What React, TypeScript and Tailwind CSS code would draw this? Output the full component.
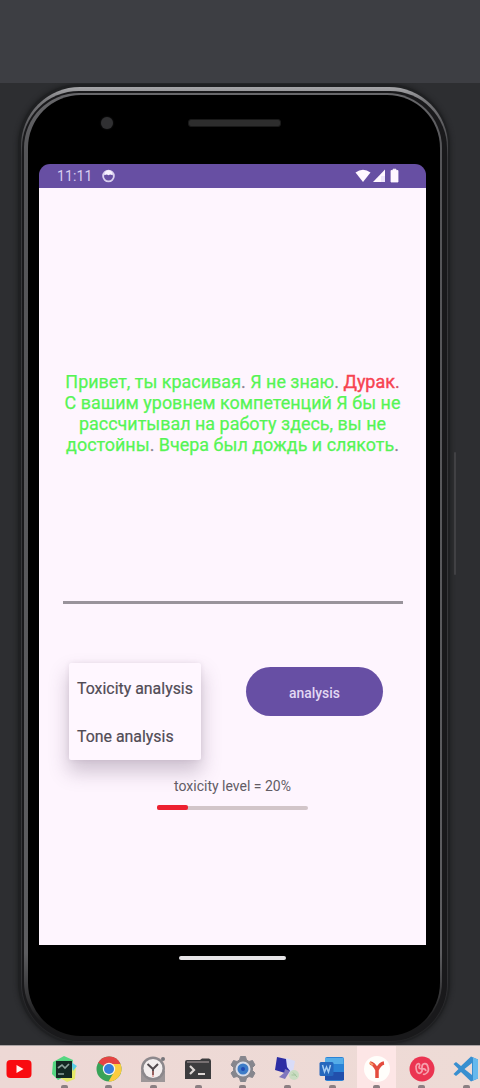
import React from "react";

const Dot = () => <span className="block h-[3px] w-[7px] shrink-0 rounded-t-[2px] bg-[#8b7f82]" />;

function StatusBar() {
  return (
    <div className="flex h-[24px] shrink-0 items-center rounded-t-[11px] bg-[#674fa3] pl-[18px] pr-[25px]">
      <span className="text-[14px] leading-[24px] tracking-[0.1px] text-[#d8cdf0]">11:11</span>
      <svg className="ml-[9px]" width="15" height="14" viewBox="0 0 14 14">
        <circle cx="7" cy="7" r="5.4" fill="none" stroke="#d9cfee" strokeWidth="1.8" />
        <path d="M2.6 6.2Q3.2 1.2 7 1.2Q10.8 1.2 11.4 6.2L8.6 5.5L7 6.2L5.3 5.5Z" fill="#f7f1ff" />
      </svg>
      <svg className="ml-auto" width="46" height="16" viewBox="0 0 46 16" fill="#fff7ff">
        <path d="M0.5 4.5Q8 -1.2 15.5 4.5L8 14Z" />
        <path d="M18 14L30 1.5V14Z" />
        <path d="M26 8H30V14H26Z" fill="#eee4fb" />
        <path d="M36 2.5H38V1.2H41V2.5H43V14H36Z" stroke="#fff7ff" strokeWidth=".8" strokeLinejoin="round" />
      </svg>
    </div>
  );
}

function Screen() {
  return (
    <div className="flex h-[781px] w-[387px] flex-col">
      <StatusBar />
      <div className="flex grow flex-col bg-[#fef5fe]">
        <div className="mt-[183px] flex h-[85px] shrink-0 flex-col items-center text-[17.95px] leading-[21px] whitespace-nowrap text-[#56f455] [-webkit-text-stroke:0.25px]">
          <p>
            Привет, ты красивая<span className="text-[#8b8490]">.</span> Я не знаю<span className="text-[#8b8490]">.</span>{" "}
            <span className="text-[#f74351] [-webkit-text-stroke:0.4px]">Дурак</span><span className="text-[#d0525f]">.</span>
          </p>
          <p>С вашим уровнем компетенций Я бы не</p>
          <p>рассчитывал на работу здесь, вы не</p>
          <p>достойны<span className="text-[#8b8490]">.</span> Вчера был дождь и слякоть<span className="text-[#8b8490]">.</span></p>
        </div>
        <div className="mr-[23px] ml-[24px] mt-[145px] h-[3px] shrink-0 bg-[#99939b]" />
        <div className="mt-[59px] flex">
          <div className="ml-[30px] flex h-[97px] w-[132px] flex-col rounded-[2px] bg-[#fff7ff] pl-[8px] text-[15.9px] whitespace-nowrap text-[#514b55] shadow-[0_11px_19px_1px_rgba(80,60,90,0.27),0_0_5px_rgba(80,60,90,0.1)] [-webkit-text-stroke:0.2px]">
            <button className="h-[49px] pt-[3px] text-left">Toxicity analysis</button>
            <button className="h-[48px] pt-[2px] text-left">Tone analysis</button>
          </div>
          <button className="ml-[45px] mt-[4px] h-[49px] w-[137px] rounded-full bg-[#674fa4] pt-[3px] text-[13.9px] font-medium text-[#e2d8f3]">analysis</button>
        </div>
        <div className="mt-[16px] flex flex-col items-center">
          <p className="text-[14px] leading-[20px] text-[#625c65]">toxicity level = 20%</p>
          <div className="mt-[10px] flex h-[4px] w-[151px] rounded-full bg-[#d2c5c9]">
            <div className="-my-px h-[5px] w-[31px] rounded-[2px] bg-[#ed2030]" />
          </div>
        </div>
      </div>
    </div>
  );
}

function Phone() {
  return (
    <div className="ml-[18px] h-[960px] w-[432px] rounded-[62px] bg-[#1f2022] pt-[3px] pr-[2px] pb-[2px] pl-[3px] shadow-[0_0_4px_1px_#202123]">
      <div className="h-full rounded-[59px] bg-[linear-gradient(180deg,#a5a5a8_0px,#77777a_14px,#39393c_70px,#37373a_860px,#242426_100%)] pt-[4px] pr-[1px] pb-[1px] pl-[1px]">
        <div className="h-full rounded-[57px] bg-[#19191b] pt-[2px] pr-[5px] pb-[4px] pl-[2px]">
          <div className="h-full rounded-[55px] bg-[linear-gradient(180deg,#68686b_0px,#545457_60px,#5d5d60_860px,#1a1a1b_930px,#19191a_100%)] pt-[2px] pr-[2px] pb-[1px] pl-[4px]">
            <div className="flex h-full flex-col rounded-[53px] bg-black pt-[2px] pl-[11px]">
              <div className="flex h-[67px] shrink-0 pt-[20px]">
                <span className="ml-[62px] h-[12px] w-[12px] rounded-full bg-[#303032] shadow-[0_0_2px_#252526]" />
                <span className="mt-[2px] ml-[75px] h-[8px] w-[93px] rounded-[3px] border border-[#191919] bg-[#2d2d2d]" />
              </div>
              <Screen />
              <div className="ml-[140px] mt-[11px] h-[4px] w-[107px] rounded-full bg-[#e6e4e7]" />
            </div>
          </div>
        </div>
      </div>
    </div>
  );
}

const icons = [
  <svg key="youtube" viewBox="0 0 28 28" width="28" height="28"><rect x="1.5" y="5" width="25" height="18" rx="4" fill="#f90b10" /><path d="M11.5 10V18L18.5 14Z" fill="#fff4f0" /></svg>,
  <svg key="pycharm" viewBox="0 0 28 28" width="28" height="28"><path d="M3 7L14 1L23 5L21 18L8 25L2 19Z" fill="#55d781" /><path d="M21 9L26 11L25 24L17 27L9 22Z" fill="#e6e969" /><path d="M21 7L27 11L23 16Z" fill="#58cee5" /><rect x="6" y="6" width="16" height="17" fill="#142923" /><path d="M8 13L12 10L15 13L19 9M8 19H14" fill="none" stroke="#8ca49c" strokeWidth="1.7" /></svg>,
  <svg key="chrome" viewBox="0 0 28 28" width="28" height="28"><circle cx="14" cy="14" r="12.5" fill="#38a358" /><path d="M14 14L3.2 7.8A12.5 12.5 0 0 1 25.5 9H14Z" fill="#e54343" /><path d="M14 9H25.5A12.5 12.5 0 0 1 13.5 26.5L19 17Z" fill="#fbcc3e" /><circle cx="14" cy="14" r="6.2" fill="#f7f4ec" /><circle cx="14" cy="14" r="5" fill="#347edc" /></svg>,
  <svg key="clock" viewBox="0 0 28 28" width="28" height="28"><rect x="2" y="16" width="24" height="11" fill="#9c9698" /><circle cx="14" cy="13.5" r="12" fill="#8c888c" /><circle cx="14" cy="13.5" r="9.5" fill="#f3eeee" /><path d="M8.5 9L14 14L19 9M14 14V20" stroke="#514a4e" strokeWidth="2" fill="none" /><path d="M14 16V22" stroke="#d9776e" strokeWidth="1" /><circle cx="24" cy="4" r="2" fill="#77777b" /></svg>,
  <svg key="terminal" viewBox="0 0 28 28" width="28" height="28"><path d="M1 7Q1 5 3 5H16L18 3.5H25Q27 4 27 6V24H1Z" fill="#3c3c3e" /><path d="M3 7H25" stroke="#777072" strokeWidth="2" /><path d="M6 11L10 15L6 19M14 19H21" stroke="#ddd7d5" strokeWidth="2.2" fill="none" /></svg>,
  <svg key="settings" viewBox="0 0 28 28" width="28" height="28"><path d="M10.5 5L11.5 1.5H16.5L17.5 5L20 6.5L23.5 5.5L26 10L23.5 12.5V15.5L26 18L23.5 22.5L20 21.5L17.5 23L16.5 26.5H11.5L10.5 23L8 21.5L4.5 22.5L2 18L4.5 15.5V12.5L2 10L4.5 5.5L8 6.5Z" fill="#86868d" strokeLinejoin="round" stroke="#86868d" /><circle cx="14" cy="14" r="7.5" fill="#d7dce8" /><circle cx="14" cy="14" r="5.5" fill="#3d7cc7" /><circle cx="14" cy="14" r="2" fill="#2049b4" /></svg>,
  <svg key="remote" viewBox="0 0 28 28" width="28" height="28"><path d="M13 3L22 6L20 17L13 20Z" fill="#d9dcf8" /><path d="M4 2L13 4L14 12L17 16L12 18L2 15Z" fill="#2c2da4" /><path d="M12 14L17 16L12 24L6 22L11 18Z" fill="#8176bd" /><circle cx="21" cy="20" r="5" fill="#cadcc2" /><path d="M18.5 20H23M20 17.5L24 22" stroke="#a5c59e" strokeWidth="1" /></svg>,
  <svg key="word" viewBox="0 0 28 28" width="28" height="28"><rect x="7" y="2" width="19" height="24" rx="2" fill="#2b83d6" /><path d="M7 3H25.5V9H7Z" fill="#55ade8" /><path d="M7 17H26V25H7Z" fill="#214fac" /><rect x="1.5" y="7" width="14" height="14" rx="1.5" fill="#2667bd" /><path d="M4.5 10L6.5 17L8.5 12L10.5 17L12.5 10" fill="none" stroke="#a6cdf3" strokeWidth="1.5" /></svg>,
  <svg key="yandex" viewBox="0 0 28 28" width="28" height="28"><circle cx="14" cy="14" r="13" fill="#fffefb" /><path d="M7 8Q11 8.5 14 15Q17 8.5 21 8M14 14V23" stroke="#e44b3d" strokeWidth="3.5" fill="none" /><path d="M6.5 7.5L10 10" stroke="#f79d6e" strokeWidth="2" /></svg>,
  <svg key="red-app" viewBox="0 0 28 28" width="28" height="28"><circle cx="14" cy="14" r="12.5" fill="#eb3451" /><path d="M8 11C8 19 12 20 14 16V12C14 8 19 7 20 12C22 17 17 20 15 19M8 11C10 7 13 9 11 12C11 16 17 11 18 16" fill="none" stroke="#f6a0ad" strokeWidth="1.7" /></svg>,
  <svg key="vscode" viewBox="0 0 28 28" width="28" height="28"><path d="M19 1.5L26 4.5V23.5L19 26.5L9 17L4 21L1.5 19L6.5 14L1.5 9L4 7L9 11ZM20 8L12.5 14L20 20Z" fill="#388fd0" fillRule="evenodd" /><path d="M21 2.5L26 4.5V23.5L21 25.5Z" fill="#65b9ed" /></svg>,
];

export default function App() {
  return (
    <main className="h-[1088px] w-[480px] overflow-hidden bg-[#2d2e31] font-['Roboto',sans-serif]">
      <div className="h-[83px] bg-[#3d3e43]" />
      <div className="flex h-[962px] overflow-hidden pt-px">
        <Phone />
        <div className="mt-[368px] ml-[4px] h-[123px] w-[2px] rounded-full bg-[#414144]" />
      </div>
      <div className="flex h-[43px] border-t border-[#aaa3a3] bg-gradient-to-r from-[#edd8d5] to-[#eedbd6]">
        <div className="-ml-[3px] flex shrink-0">
          {icons.map((icon, i) => (
            <div key={i} className="flex w-[44.7px] justify-center">
              <div className={i === 8 ? "flex w-[39px] flex-col items-center bg-[#fde6e6] pt-[9px]" : "flex w-[39px] flex-col items-center pt-[9px]"}>
                {icon}
                <div className="mt-[2px]">{i > 0 && <Dot />}</div>
              </div>
            </div>
          ))}
        </div>
      </div>
    </main>
  );
}
